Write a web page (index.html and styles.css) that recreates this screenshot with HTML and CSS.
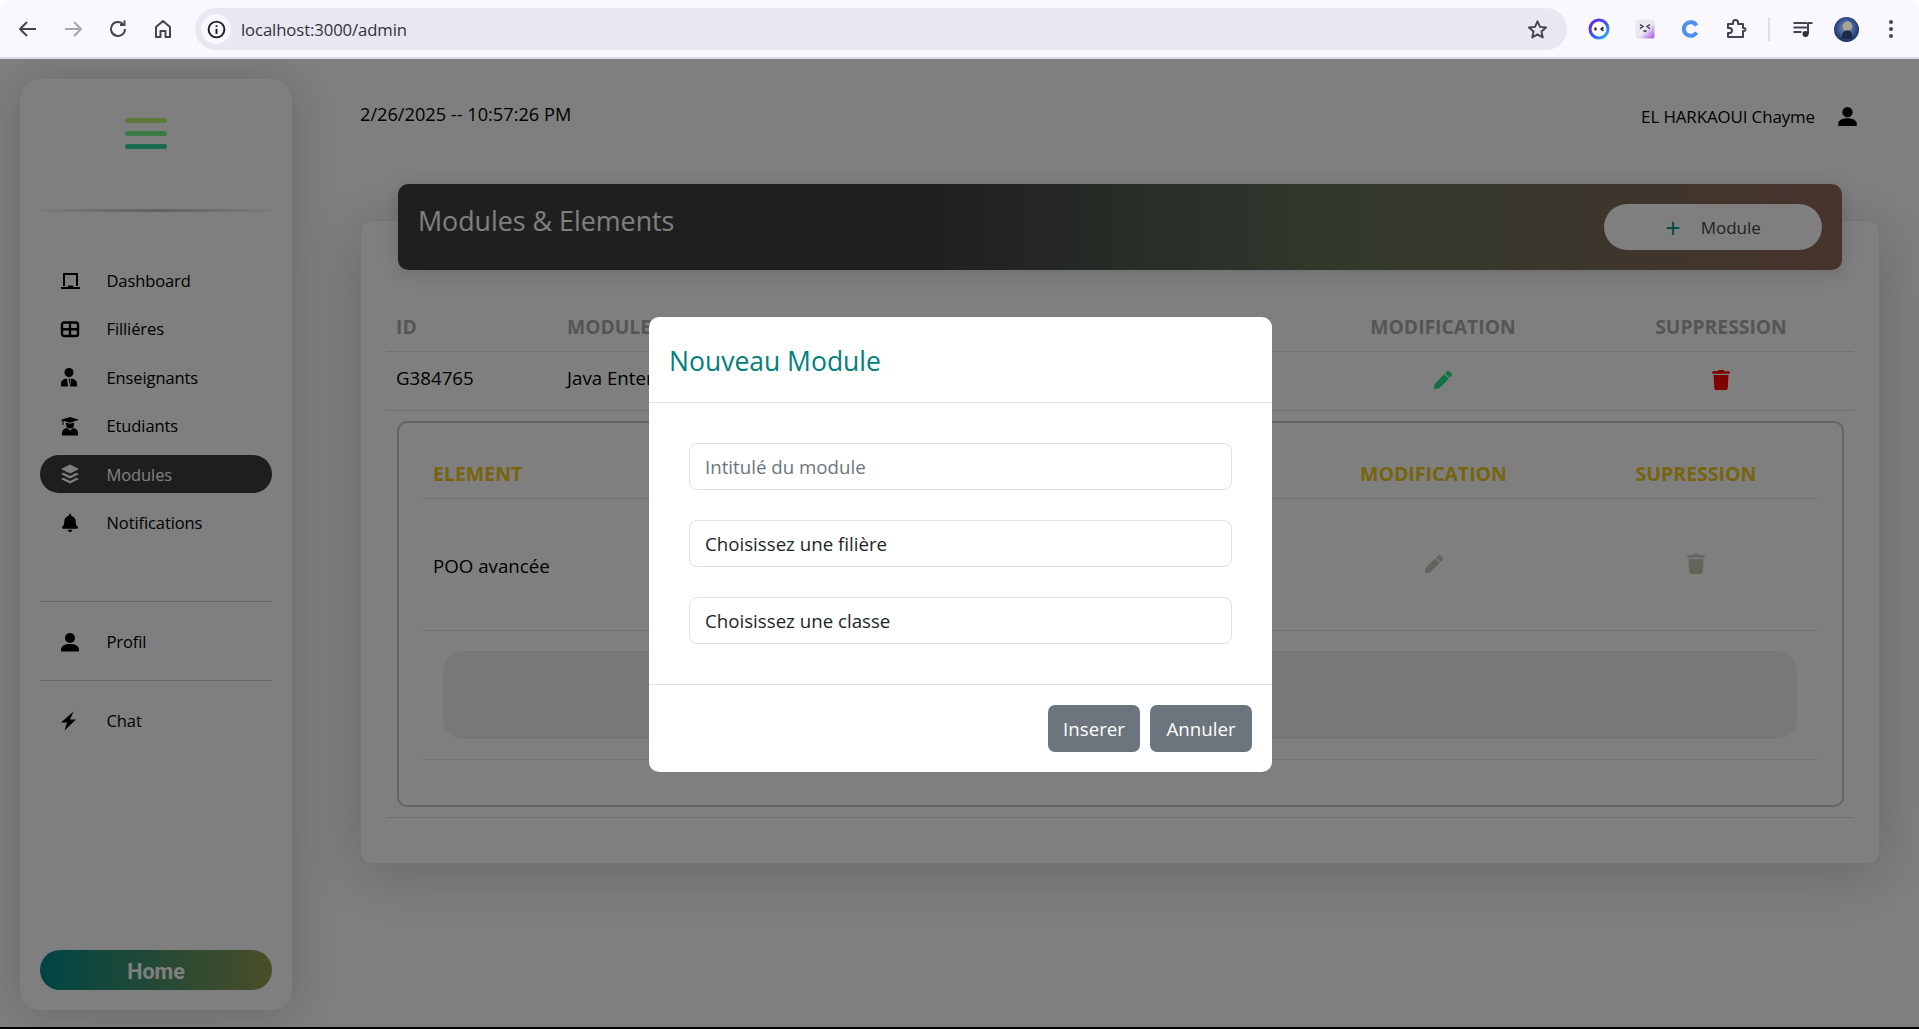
FILE: index.html
```html
<!DOCTYPE html>
<html lang="fr">
<head>
<meta charset="utf-8">
<title>Admin</title>
<link rel="stylesheet" href="styles.css">
</head>
<body>
<header class="chrome">
  <div class="nav-btns">
    <svg class="cicon" viewBox="0 0 24 24"><path d="M20 12H5M11 5l-7 7 7 7" class="st"/></svg>
    <svg class="cicon dim" viewBox="0 0 24 24"><path d="M4 12h15M13 5l7 7-7 7" class="st"/></svg>
    <svg class="cicon" viewBox="0 0 24 24"><path d="M19 12a7 7 0 1 1-2.200-5.100M18.500 3.500v4.500h-4.500" class="st"/></svg>
    <svg class="cicon" viewBox="0 0 24 24"><path d="M5 20V10l7-6 7 6v10h-4.500v-6h-5v6z" class="st"/></svg>
  </div>
  <div class="omnibox">
    <span class="site-info"><svg class="info" viewBox="0 0 24 24"><circle cx="12" cy="12" r="9" class="st2"/><path d="M12 11v6M12 7v2" class="st2"/></svg></span>
    <span class="url">localhost:3000/admin</span>
    <svg class="star" viewBox="0 0 24 24"><path d="M12 3.500l2.600 5.800 6.300.6-4.800 4.200 1.400 6.200-5.500-3.200-5.500 3.200 1.400-6.200-4.800-4.200 6.300-.6z" class="st"/></svg>
  </div>
  <div class="exts">
    <svg class="ext" viewBox="0 0 24 24"><defs><linearGradient id="rg" x1="0" y1="0" x2="1" y2="1"><stop offset="0" stop-color="#6a1fe0"/><stop offset=".6" stop-color="#3a5cf0"/><stop offset="1" stop-color="#20c8f0"/></linearGradient></defs><circle cx="12" cy="12" r="9" class="ring"/><ellipse cx="8.500" cy="12" rx="1.300" ry="1.800" class="ink"/><path d="M16.500 10.200l-2.200 1.800 2.200 1.800" class="face"/></svg>
    <svg class="ext" viewBox="0 0 24 24"><defs><linearGradient id="eg" x1="0" y1="0" x2="1" y2="1"><stop offset=".55" stop-color="#ebe8f4"/><stop offset="1" stop-color="#a050e0"/></linearGradient></defs><rect x="2.500" y="2.500" width="19" height="19" rx="2" fill="url(#eg)"/><path d="M7 7.500l3 2-3 2M17 7.500l-3 2 3 2M10.500 13.500l1.500 1 1.500-1" class="thin"/></svg>
    <svg class="ext" viewBox="0 0 24 24"><path d="M18.500 8.500A6.800 6.800 0 1 0 18.500 15.500" class="blue"/></svg>
    <svg class="ext" viewBox="0 0 24 24"><path d="M4 7h5V5.500a2.500 2.500 0 0 1 5 0V7h5v4h1a1.500 1.500 0 0 1 0 3h-1v6H4v-4h1.500a2.500 2.500 0 0 0 0-5H4z" class="st"/></svg>
    <span class="vsep"></span>
    <svg class="ext" viewBox="0 0 24 24"><path d="M2.500 6h14M2.500 10.500h14M2.500 15h8" class="st"/><path d="M17 6h4.500M17 6v11" class="st"/><circle cx="14.500" cy="17" r="3" class="ink"/></svg>
    <svg class="avatar" viewBox="0 0 26 26"><defs><radialGradient id="ag" cx=".5" cy=".45" r=".55"><stop offset="0" stop-color="#8d97ad"/><stop offset=".6" stop-color="#3c5a9a"/><stop offset="1" stop-color="#1b2f5c"/></radialGradient></defs><circle cx="13" cy="13" r="13" fill="url(#ag)"/><ellipse cx="14" cy="9.500" rx="5" ry="5" fill="#a9a593"/><path d="M8 23c0-7 2-9 6-9s5 2 5 9z" fill="#1d2a44"/></svg>
    <svg class="dots" viewBox="0 0 6 24"><circle cx="3" cy="5" r="2"/><circle cx="3" cy="12" r="2"/><circle cx="3" cy="19" r="2"/></svg>
  </div>
</header>

<div class="page">
  <aside class="sidebar">
    <div class="brand">
      <span class="burger"><i class="b1"></i><i class="b2"></i><i class="b3"></i></span>
    </div>
    <div class="fade-rule"></div>
    <nav class="nav-list">
      <a class="nav-item"><svg class="nico" viewBox="0 0 20 20"><path fill-rule="evenodd" d="M3 2h15v13h-2V4H5v11H3zM1 16h6.500l.8-1.500h4.400l.8 1.500H20v2H1z"/></svg>Dashboard</a>
      <a class="nav-item"><svg class="nico" viewBox="0 0 20 20"><rect x="2" y="3.500" width="16" height="13.500" rx="2" class="gridline"/><path d="M2 10.200h16M10 3.500v13.500" class="gridline"/></svg>Filliéres</a>
      <a class="nav-item"><svg class="nico" viewBox="0 0 20 20"><circle cx="9" cy="5.500" r="4.500"/><path d="M1 19.500v-3c0-3 2.500-4.500 6-5l1 8zM17 19.500v-3c0-3-2.500-4.500-6-5l-1 8zM8.200 11.500h1.600l.3 1-.5 5h-.2l-.5-5z"/></svg>Enseignants</a>
      <a class="nav-item"><svg class="nico" viewBox="0 0 20 20"><path d="M10 1l9 2.800-9 3-6.500-2.100V9h-1V5.300L1 3.800z"/><path d="M6 6.500l4 1.300 4-1.300v2a4 4 0 0 1-8 0z"/><path d="M2 19.500v-2.500c0-3 2-4.500 5-5l3 2.500 3-2.500c3 .5 5 2 5 5v2.500z"/></svg>Etudiants</a>
      <a class="nav-item active"><svg class="nico" viewBox="0 0 20 20"><path d="M10 .5l9 4.500-9 4.500L1 5zM3.500 8.800l6.500 3.200 6.500-3.200L19 10l-9 4.500L1 10zM3.500 13.800l6.500 3.200 6.500-3.200L19 15l-9 4.500L1 15z"/></svg>Modules</a>
      <a class="nav-item"><svg class="nico" viewBox="-32 -24 512 560"><path d="M224 512c35.320 0 63.970-28.650 63.970-64H160.030c0 35.350 28.650 64 63.970 64zm215.390-149.710c-19.320-20.760-55.470-51.990-55.470-154.290 0-77.700-54.480-139.900-127.940-155.160V32c0-17.670-14.320-32-31.980-32s-31.980 14.330-31.980 32v20.840C118.560 68.100 64.080 130.300 64.080 208c0 102.300-36.150 133.530-55.470 154.290-6 6.450-8.660 14.160-8.610 21.710.11 16.400 12.980 32 32.100 32h383.800c19.120 0 32-15.600 32.100-32 .05-7.550-2.610-15.270-8.610-21.710z"/></svg>Notifications</a>
    </nav>
    <div class="rule rule-a"></div>
    <a class="nav-item"><svg class="nico" viewBox="0 0 20 20"><circle cx="10" cy="6" r="5"/><path d="M1 19.500v-2c0-3.500 4-5.500 9-5.500s9 2 9 5.500v2z"/></svg>Profil</a>
    <div class="rule rule-b"></div>
    <a class="nav-item"><svg class="nico" viewBox="0 0 20 20"><path d="M13.500.5L1 11.500h6L4.500 19.500 16 8.500h-6z"/></svg>Chat</a>
    <a class="home-btn">Home</a>
  </aside>

  <main class="main">
    <div class="topbar">
      <span class="clock">2/26/2025 -- 10:57:26 PM</span>
      <span class="who">EL HARKAOUI Chayme<svg class="who-ico" viewBox="1 1 18 18.500"><circle cx="10" cy="6" r="5"/><path d="M1 19.500v-2c0-3.500 4-5.500 9-5.500s9 2 9 5.500v2z"/></svg></span>
    </div>

    <section class="card">
      <div class="card-head">
        <h1 class="card-title">Modules &amp; Elements</h1>
        <button class="add-btn"><span class="plus">+</span>Module</button>
      </div>

      <div class="t-row t-head">
        <span class="c-id">ID</span><span>MODULE</span><span class="mid">MODIFICATION</span><span class="mid">SUPPRESSION</span>
      </div>
      <div class="t-row t-body">
        <span class="c-id">G384765</span><span>Java Enterprise Edition</span>
        <span class="mid"><svg class="act green" viewBox="0 0 512 512"><use href="#pen"/></svg></span>
        <span class="mid"><svg class="act red" viewBox="0 0 448 512"><use href="#bin"/></svg></span>
      </div>

      <div class="sub-box">
        <div class="s-row s-head"><span>ELEMENT</span><span class="mid">MODIFICATION</span><span class="mid">SUPRESSION</span></div>
        <div class="s-row s-body">
          <span class="s-name">POO avancée</span>
          <span class="mid s-ico"><svg class="act grey" viewBox="0 0 512 512"><use href="#pen"/></svg></span>
          <span class="mid s-ico"><svg class="act grey" viewBox="0 0 448 512"><use href="#bin"/></svg></span>
        </div>
        <div class="s-panel-wrap"><div class="s-panel"></div></div>
      </div>
      <div class="end-rule"></div>
    </section>
  </main>

  <div class="backdrop">
    <div class="modal">
      <div class="modal-head"><h2 class="modal-title">Nouveau Module</h2></div>
      <div class="modal-body">
        <input class="field" type="text" placeholder="Intitulé du module">
        <select class="field"><option>Choisissez une filière</option></select>
        <select class="field"><option>Choisissez une classe</option></select>
      </div>
      <div class="modal-foot">
        <button class="btn btn-a">Inserer</button>
        <button class="btn btn-b">Annuler</button>
      </div>
    </div>
  </div>
</div>
<div class="win-edge"></div>

<svg class="defs" width="0" height="0">
  <defs>
    <path id="pen" d="M497.900 142.100l-46.100 46.100c-4.700 4.700-12.300 4.700-17 0l-111-111c-4.700-4.700-4.700-12.300 0-17l46.100-46.100c18.700-18.700 49.100-18.700 67.900 0l60.100 60.100c18.800 18.700 18.800 49.100 0 67.900zM284.200 99.800L21.600 362.400.4 483.900c-2.900 16.400 11.400 30.600 27.800 27.800l121.500-21.300 262.600-262.600c4.700-4.700 4.700-12.300 0-17l-111-111c-4.800-4.700-12.400-4.700-17.100 0z"/>
    <path id="bin" d="M432 32H312l-9.400-18.700A24 24 0 0 0 281.100 0H166.800a23.720 23.720 0 0 0-21.400 13.300L136 32H16A16 16 0 0 0 0 48v32a16 16 0 0 0 16 16h416a16 16 0 0 0 16-16V48a16 16 0 0 0-16-16zM53.200 467a48 48 0 0 0 47.900 45h245.800a48 48 0 0 0 47.900-45L416 128H32z"/>
  </defs>
</svg>
</body>
</html>
```
FILE: styles.css
```css
* { box-sizing: border-box; }
html, body { margin: 0; height: 100%; overflow: hidden; }
body {
  background: #fff;
  font-family: "Open Sans", "Noto Sans", sans-serif;
  color: #000;
  font-size: 18.700px;
}
.defs { display: block; height: 0; }

/* browser bar */
.chrome {
  height: 59px;
  background: #f9f7ff;
  border-bottom: 2px solid #dcdae6;
  border-radius: 10px 10px 0 0;
  display: flex;
  align-items: flex-start;
  padding: 8px 0 0 16px;
}
.nav-btns { display: flex; gap: 21px; width: 179px; padding-top: 9px; }
.cicon { width: 24px; height: 24px; }
.cicon.dim { opacity: .45; }
.st { fill: none; stroke: #45434f; stroke-width: 2; stroke-linejoin: round; }
.st2 { fill: none; stroke: #1d1c24; stroke-width: 2.200; }
.omnibox {
  width: 1372px;
  height: 42px;
  background: #e9e7f2;
  border-radius: 21px;
  display: flex;
  align-items: center;
  padding: 0 18px 0 6px;
}
.site-info {
  width: 30px; height: 30px; border-radius: 50%;
  background: #f9f7ff;
  display: flex; align-items: center; justify-content: center;
  margin-right: 10px;
}
.info { width: 21px; height: 21px; }
.url { font-size: 16.700px; color: #33323c; flex: 1; letter-spacing: -.1px; }
.star { width: 23px; height: 23px; }
.exts { display: flex; align-items: center; height: 42px; margin-left: 20px; gap: 21.500px; }
.ext { width: 24px; height: 24px; flex: none; }
.ring { fill: #fff; stroke: url(#rg); stroke-width: 3; }
.ink { fill: #33323c; }
.face { fill: none; stroke: #2c2b35; stroke-width: 1.800; }
.thin { fill: none; stroke: #2c2b35; stroke-width: 1.300; }
.blue { fill: none; stroke: #4f8ff0; stroke-width: 4; }
.vsep { width: 2px; height: 24px; background: #e2def2; margin: 0 -1px; }
.avatar { width: 25px; height: 25px; flex: none; margin: 0 -1px 0 -2px; }
.dots { width: 6px; height: 24px; fill: #45434f; margin-left: 8px; }

/* page */
.page {
  position: relative;
  height: 968px;
  display: flex;
  background: #fff;
  overflow: hidden;
}
.sidebar {
  width: 272px;
  height: 931px;
  margin: 20px 0 0 20px;
  padding: 0 20px 20px;
  flex: none;
  display: flex;
  flex-direction: column;
  border-radius: 20px;
  background: #fff;
  box-shadow: 0 4px 50px rgba(0,0,0,.2);
}
.brand { height: 130px; padding: 39px 0 0 85px; }
.burger { display: flex; flex-direction: column; gap: 8px; width: 42px; }
.burger i { display: block; height: 5px; border-radius: 3px; }
.b1 { background: #bdf474; }
.b2 { background: #7cf48a; }
.b3 { background: #34d4a0; }
.fade-rule {
  height: 3px;
  background: linear-gradient(90deg, rgba(0,0,0,.03), rgba(0,0,0,.24) 50%, rgba(0,0,0,.03));
  margin-bottom: 49.600px;
}
.nav-list { display: flex; flex-direction: column; gap: 10.400px; }
.nav-item {
  height: 38px;
  display: flex;
  align-items: center;
  padding-left: 20px;
  font-size: 16.500px;
  border-radius: 19px;
  letter-spacing: -.1px;
  flex: none;
}
.nico { width: 20px; height: 20px; margin-right: 26.500px; fill: #000; flex: none; }
.gridline { fill: none; stroke: #000; stroke-width: 2.400; }
.nav-item.active { background: #3c3c3c; color: #fff; }
.active .nico { fill: #fff; }
.rule { height: 1px; background: #d0d0d0; flex: none; }
.rule-a { margin: 59px 0 21px; }
.rule-b { margin: 19px 0 21px; }
.home-btn {
  margin-top: auto;
  height: 40px;
  padding-top: 2px;
  border-radius: 20px;
  background: linear-gradient(90deg, #008a88, #949c50);
  color: #fff;
  font-family: Roboto, sans-serif;
  font-weight: 700;
  font-size: 21.500px;
  display: flex; align-items: center; justify-content: center;
}

.main { width: 1520px; margin-left: 68px; flex: none; }
.topbar {
  height: 114px;
  display: flex;
  align-items: center;
  justify-content: space-between;
  padding-right: 23px;
}
.clock { font-size: 18.200px; padding-bottom: 4px; }
.who { display: flex; align-items: center; font-size: 16.900px; letter-spacing: -.1px; }
.who-ico { width: 19px; height: 19px; margin-left: 23px; }

.card {
  margin-top: 47px;
  height: 644px;
  background: #fff;
  border-radius: 12px;
  border: 1px solid #e8e8e8;
  padding: 0 25px;
  box-shadow: 0 10px 60px rgba(0,0,0,.2);
}
.card-head {
  height: 86px;
  margin: -37px 12px 0 12px;
  padding: 20px 20px 0 20px;
  border-radius: 10px;
  background: linear-gradient(90deg, #3e3e3e 0%, #3e3e3e 36%, #546254 55%, #667458 67%, #7a6c58 84%, #90685a 100%);
  box-shadow: 0 4px 20px rgba(0,0,0,.15);
  display: flex;
  justify-content: space-between;
  align-items: flex-start;
}
.card-title { margin: 0; font-size: 26.800px; font-weight: 400; color: #fff; line-height: 34px; }
.add-btn {
  width: 218px; height: 46px;
  border: 0; border-radius: 23px;
  background: #fff;
  color: #444;
  font: inherit; font-size: 17px;
  display: flex; align-items: center; justify-content: center;
  padding: 0;
}
.plus { color: #009088; font-size: 27px; line-height: 1; margin-right: 20px; }

.t-row { display: grid; grid-template-columns: 181px 1fr 290px 266px; align-items: center; border-bottom: 1px solid #e0e0e0; }
.c-id { padding-left: 10px; }
.mid { text-align: center; }
.t-head { height: 82px; padding-top: 44px; align-items: start; font-weight: 700; color: #aaa; line-height: 26px; font-size: 19.300px; }
.t-body { height: 59px; padding-bottom: 7px; }
.act { width: 18px; height: 20px; display: inline-block; vertical-align: middle; }
.green { fill: #20e47e; }
.red { fill: #ff0000; }
.grey { fill: #ccc6b8; }

.sub-box {
  margin: 10px 10px 0 11px;
  height: 386px;
  border: 2px solid #c8c8c8;
  border-radius: 10px;
  padding: 0 25px 0 24px;
}
.s-row { display: grid; grid-template-columns: 1fr 283px 242px; align-items: center; border-bottom: 1px solid #e0e0e0; }
.s-row > span:first-child { padding-left: 10px; }
.s-head { height: 76px; padding-top: 26px; font-weight: 700; color: #f0c818; font-size: 19.500px; }
.s-body { height: 132px; }
.s-name { padding-top: 2px; }
.s-ico { padding-bottom: 7px; }
.s-panel-wrap { height: 129px; padding: 20px 20px 0; border-bottom: 1px solid #e0e0e0; }
.s-panel { height: 88px; background: #f2f1ee; border-radius: 20px; }
.end-rule { margin-top: 10px; border-top: 1px solid #e0e0e0; }

/* modal */
.backdrop {
  position: absolute;
  inset: 0;
  background: rgba(0,0,0,.5);
  padding-top: 258px;
}
.modal {
  width: 623px;
  height: 455px;
  margin-left: 649px;
  background: #fff;
  border-radius: 10px;
  display: flex;
  flex-direction: column;
}
.modal-head { height: 86px; padding: 2px 20px 0; display: flex; align-items: center; border-bottom: 1px solid #dee2e6; }
.modal-title { margin: 0; font-size: 26.500px; font-weight: 400; color: #008080; }
.modal-body { flex: 1; padding: 40px 40px 0; display: flex; flex-direction: column; gap: 30px; }
.field {
  display: block;
  width: 100%;
  height: 47px;
  border: 1px solid #dee2e6;
  border-radius: 8px;
  background: #fff;
  padding: 0 15px;
  font: inherit;
  color: #212529;
  appearance: none;
  outline: 0;
}
.field::placeholder { color: #6c757d; opacity: 1; }
.modal-foot { height: 88px; border-top: 1px solid #dee2e6; display: flex; justify-content: flex-end; gap: 10px; padding: 20px 20px 0; }
.btn { height: 47px; border: 0; border-radius: 7px; background: #6c757d; color: #fff; font: inherit; padding: 0; }
.btn-a { width: 92px; }
.btn-b { width: 102px; }

.win-edge { height: 2px; background: #000; }
```
